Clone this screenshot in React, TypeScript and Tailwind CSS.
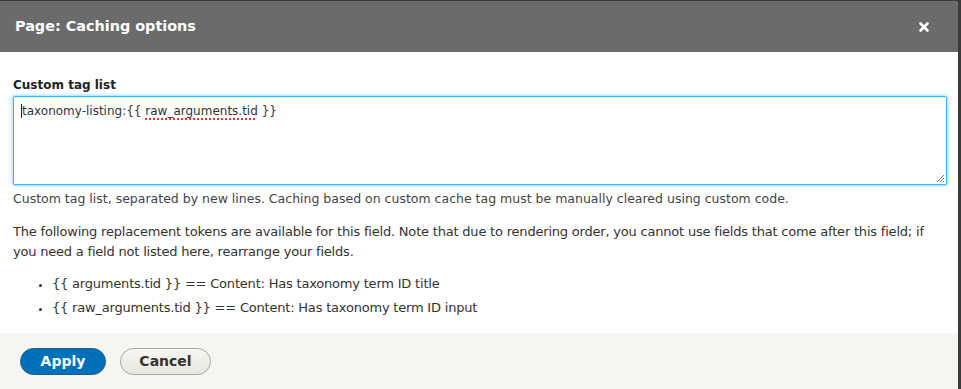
import { X } from "lucide-react";

const FONT = { fontFamily: '"DejaVu Sans", "Noto Sans", sans-serif' };

export default function App() {
  return (
    <div className="h-[389px] w-[961px] overflow-hidden bg-[#3b3b3b]" style={FONT}>
      <div className="mt-px flex h-[388px] w-[958px] flex-col overflow-hidden rounded-tr-[4px] bg-white">
        {/* header */}
        <div className="flex h-[51px] shrink-0 items-center justify-between bg-[#6b6b6b] pl-[15px] pr-[27px]">
          <h1 className="pt-[1px] text-[14.4px] font-bold text-white">Page: Caching options</h1>
          <button type="button" aria-label="Close" className="text-white">
            <X className="h-[14px] w-[14px]" strokeWidth={4.5} />
          </button>
        </div>

        {/* body */}
        <div className="flex-1 px-[13px] pt-[25px] text-[13px] text-[#333]">
          <label className="block text-[12px] font-bold leading-[16px] text-[#222]">Custom tag list</label>
          <div className="relative mt-[3px] h-[89px] w-[934px] rounded-[2px] border border-[#40b0ff] px-[7px] py-[6px] text-[12px] leading-[16px] text-[#333] shadow-[0_0_3px_1px_rgba(90,180,255,0.55)]">
            <span className="border-l border-[#222]">taxonomy-listing:{"{{ "}</span>
            <span className="underline decoration-[#e33] decoration-dotted decoration-[1.5px] underline-offset-[3px]">raw_arguments.tid</span>
            <span>{" }}"}</span>
            <svg className="absolute bottom-[1px] right-[1px]" width="9" height="9" viewBox="0 0 9 9">
              <path d="M8 1L1 8M8 4L4 8M8 7L7 8" stroke="#777" strokeWidth="1" />
            </svg>
          </div>
          <p className="mt-[6px] text-[12.5px] leading-[16px] text-[#444]">
            Custom tag list, separated by new lines. Caching based on custom cache tag must be manually cleared using custom code.
          </p>
          <p className="mt-[15px] leading-[20px] tracking-[-0.2px]">
            The following replacement tokens are available for this field. Note that due to rendering order, you cannot use fields that come after this field; if you need a field not listed here, rearrange your fields.
          </p>
          <ul className="mt-[10px] list-disc pl-[39px] leading-[24px] tracking-[-0.2px] marker:text-[11px]">
            <li>{"{{ arguments.tid }} == Content: Has taxonomy term ID title"}</li>
            <li>{"{{ raw_arguments.tid }} == Content: Has taxonomy term ID input"}</li>
          </ul>
        </div>

        {/* footer */}
        <div className="flex h-[56px] shrink-0 items-center gap-[14px] bg-[#f5f5f2] pl-[20px]">
          <button
            type="button"
            className="h-[27px] w-[86px] rounded-[20px] border border-[#1e5c90] bg-[#0071b8] text-[14px] font-bold text-white"
          >
            Apply
          </button>
          <button
            type="button"
            className="h-[27px] w-[91px] rounded-[20px] border border-[#a6a6a6] bg-gradient-to-b from-[#f6f6f3] to-[#e7e7df] text-[14px] font-bold text-[#333]"
          >
            Cancel
          </button>
        </div>
      </div>
    </div>
  );
}
